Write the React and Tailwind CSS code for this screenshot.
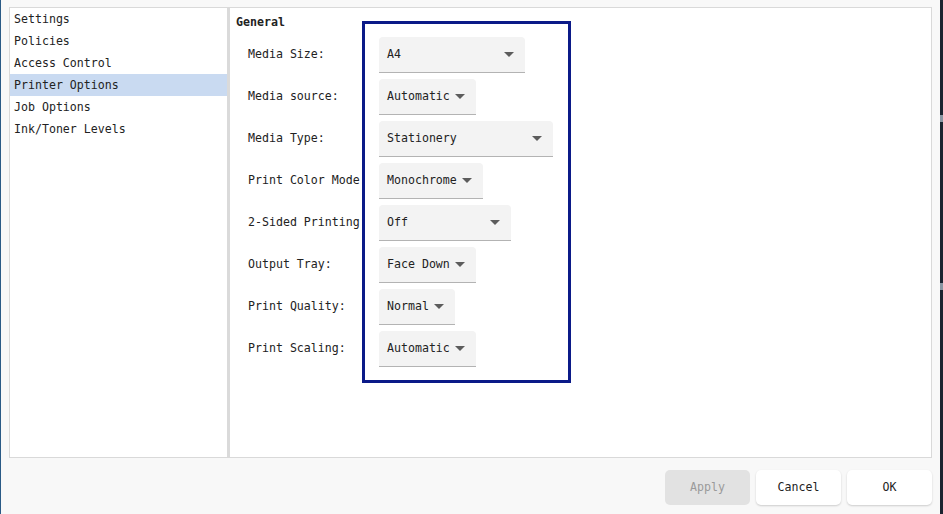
import React from "react";

const items = ["Settings", "Policies", "Access Control", "Printer Options", "Job Options", "Ink/Toner Levels"];

const rows = [
  { label: "Media Size:", value: "A4", w: "w-[146px]" },
  { label: "Media source:", value: "Automatic", w: "w-[97px]" },
  { label: "Media Type:", value: "Stationery", w: "w-[174px]" },
  { label: "Print Color Mode:", value: "Monochrome", w: "w-[104px]" },
  { label: "2-Sided Printing:", value: "Off", w: "w-[132px]" },
  { label: "Output Tray:", value: "Face Down", w: "w-[97px]" },
  { label: "Print Quality:", value: "Normal", w: "w-[76px]" },
  { label: "Print Scaling:", value: "Automatic", w: "w-[97px]" },
];

function Arrow() {
  return (
    <svg width="10" height="5" viewBox="0 0 10 5" className="ml-auto shrink-0">
      <path d="M0 0 L10 0 L5 5 Z" fill="#5c5c5c" />
    </svg>
  );
}

export default function App() {
  const font = { fontFamily: '"DejaVu Sans Mono", "Liberation Mono", monospace' };
  return (
    <div className="w-[943px] h-[514px] bg-[#f8f8f8] flex overflow-hidden text-[11.6px] text-[#222]" style={font}>
      <div className="w-[1px] h-full bg-[#2a5a86] shrink-0" />
      <div className="flex-1 flex flex-col">
        <div className="mt-[7px] ml-[8px] mr-[8px] h-[451px] border border-[#d9d9d9] bg-white flex">
          <div className="w-[217px] shrink-0 flex flex-col">
            {items.map((it) => (
              <div
                key={it}
                className={`h-[22px] leading-[22px] pl-[4px] ${it === "Printer Options" ? "bg-[#c9daf1]" : ""}`}
              >
                {it}
              </div>
            ))}
          </div>
          <div className="w-[3px] shrink-0 bg-[#dadada]" />
          <div className="flex-1 relative pl-[6px] pt-[6px]">
            <div className="font-bold leading-[16px]">General</div>
            <div className="mt-[7px] flex flex-col gap-[6px] pl-[12px]">
              {rows.map((r) => (
                <div key={r.label} className="flex items-center h-[36px]">
                  <div className="w-[131px] shrink-0 whitespace-nowrap">{r.label}</div>
                  <div
                    className={`${r.w} h-[36px] bg-[#f3f3f3] rounded-t-[4px] border-b border-[#b3b3b3] flex items-center pl-[8px] pr-[11px] relative z-10`}
                  >
                    <span className="mr-[4px] whitespace-nowrap">{r.value}</span>
                    <Arrow />
                  </div>
                </div>
              ))}
            </div>
            <div className="absolute left-[132px] top-[13px] w-[209px] h-[362px] border-[3px] border-[#0b1a88] z-20 pointer-events-none" />
          </div>
        </div>
        <div className="flex justify-end gap-[6px] mt-[12px] mr-[8px]">
          <div className="w-[85px] h-[35px] rounded-[5px] bg-[#e2e2e2] text-[#9a9a9a] flex items-center justify-center">Apply</div>
          <div className="w-[85px] h-[35px] rounded-[5px] bg-white shadow-[0_1px_2px_rgba(0,0,0,0.18)] flex items-center justify-center">Cancel</div>
          <div className="w-[85px] h-[35px] rounded-[5px] bg-white shadow-[0_1px_2px_rgba(0,0,0,0.18)] flex items-center justify-center">OK</div>
        </div>
      </div>
      <div className="w-[3px] h-full bg-[#1b2430] shrink-0 flex flex-col">
        <div className="mt-[115px] h-[7px] bg-[#8a96a3]" />
        <div className="mt-[161px] h-[7px] bg-[#8a96a3]" />
      </div>
    </div>
  );
}
